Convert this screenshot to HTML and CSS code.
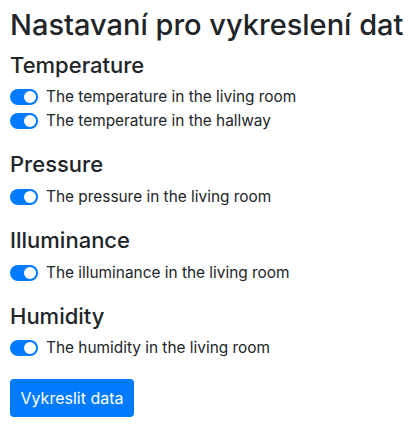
FILE: index.html
```html
<!DOCTYPE html>
<html lang="cs">
<head>
<meta charset="utf-8">
<link rel="stylesheet" href="styles.css">
</head>
<body>
<div class="page">
  <h1 class="title">Nastavaní pro vykreslení dat</h1>
  <section class="group">
    <h2 class="group-title">Temperature</h2>
    <label class="switch"><span class="toggle"></span><span class="label">The temperature in the living room</span></label>
    <label class="switch"><span class="toggle"></span><span class="label">The temperature in the hallway</span></label>
  </section>
  <section class="group">
    <h2 class="group-title">Pressure</h2>
    <label class="switch"><span class="toggle"></span><span class="label">The pressure in the living room</span></label>
  </section>
  <section class="group">
    <h2 class="group-title">Illuminance</h2>
    <label class="switch"><span class="toggle"></span><span class="label">The illuminance in the living room</span></label>
  </section>
  <section class="group">
    <h2 class="group-title">Humidity</h2>
    <label class="switch"><span class="toggle"></span><span class="label">The humidity in the living room</span></label>
  </section>
  <button class="btn">Vykreslit data</button>
</div>
</body>
</html>
```
FILE: styles.css
```css
html, body { margin: 0; padding: 0; background: #fff; }
body {
  font-family: Inter, "Liberation Sans", sans-serif;
  color: #212529;
  font-size: 15.4px;
  line-height: 24px;
}
.page { padding: 6.5px 10px 0; display: flex; flex-direction: column; align-items: flex-start; }
.title { font-size: 29px; font-weight: 500; line-height: 35px; margin: 0 0 10px; white-space: nowrap; }
.group { display: flex; flex-direction: column; margin-bottom: 18.3px; }
.group-title { font-size: 22px; font-weight: 500; line-height: 26px; margin: 0 0 7.5px; }
.switch { display: flex; align-items: center; gap: 8px; height: 24px; }
.toggle { width: 28px; height: 16px; border-radius: 8px; background: #007bff; position: relative; flex: none; }
.toggle::after { content: ""; position: absolute; right: 2px; top: 2px; width: 12px; height: 12px; border-radius: 50%; background: #fff; }
.btn { font: inherit; font-size: 16px; color: #fff; background: #007bff; border: 0; border-radius: 4px; width: 124px; height: 38px; padding: 0; line-height: 38px; }
```
